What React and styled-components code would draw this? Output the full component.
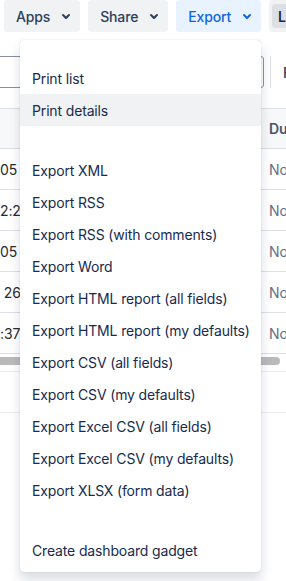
import React from "react";
import styled, { createGlobalStyle } from "styled-components";

const GlobalStyle = createGlobalStyle`
  body {
    margin: 0;
    background: #ffffff;
    font-family: Inter, "Liberation Sans", sans-serif;
    letter-spacing: -0.15px;
    overflow: hidden;
  }
`;

const sections = [
  ["Print list", "Print details"],
  [
    "Export XML",
    "Export RSS",
    "Export RSS (with comments)",
    "Export Word",
    "Export HTML report (all fields)",
    "Export HTML report (my defaults)",
    "Export CSV (all fields)",
    "Export CSV (my defaults)",
    "Export Excel CSV (all fields)",
    "Export Excel CSV (my defaults)",
    "Export XLSX (form data)",
  ],
  ["Create dashboard gadget"],
];

const rows = ["05 PM", "2:21 PM", "05 PM", " 26 PM", ":37 PM"];

function Chevron() {
  return (
    <IconBox>
      <svg width="24" height="24" viewBox="0 0 24 24">
        <path
          fill="currentColor"
          d="M8.292 10.293a1.009 1.009 0 0 0 0 1.419l2.939 2.965c.218.215.5.322.779.322s.556-.107.769-.322l2.93-2.955a1.01 1.01 0 0 0 0-1.419.987.987 0 0 0-1.406 0l-2.298 2.317-2.307-2.327a.99.99 0 0 0-1.406 0z"
        />
      </svg>
    </IconBox>
  );
}

export default function App() {
  return (
    <Page>
      <GlobalStyle />
      <Toolbar>
        <ToolButton>
          Apps
          <Chevron />
        </ToolButton>
        <ToolButton>
          Share
          <Chevron />
        </ToolButton>
        <ToolButton active>
          Export
          <Chevron />
        </ToolButton>
        <ToolButton compact>
          <Chip>List</Chip>
        </ToolButton>
      </Toolbar>

      <SearchRow>
        <SearchInput />
        <Divider />
        <FilterLabel>Filters</FilterLabel>
      </SearchRow>

      <Table>
        <HeaderRow>
          <Cell />
          <HeadCell>Due</HeadCell>
        </HeaderRow>
        {rows.map((text, i) => (
          <Row key={i}>
            <Cell>{text}</Cell>
            <ValueCell>None</ValueCell>
          </Row>
        ))}
      </Table>
      <ScrollTrack>
        <Thumb />
      </ScrollTrack>
      <Footer />

      <Menu>
        {sections.map((items, i) => (
          <Section key={i} first={i === 0}>
            {items.map((label) => (
              <MenuItem key={label} highlighted={label === "Print details"}>
                {label}
              </MenuItem>
            ))}
          </Section>
        ))}
      </Menu>
    </Page>
  );
}

const Page = styled.div`
  position: relative;
  width: 286px;
  height: 581px;
  overflow: hidden;
`;

const Toolbar = styled.div`
  display: flex;
  gap: 8px;
  padding-left: 4px;
  height: 32px;
  white-space: nowrap;
`;

const ToolButton = styled.button`
  display: flex;
  align-items: center;
  flex-shrink: 0;
  height: 32px;
  padding: ${({ compact }) => (compact ? "0 3px" : "0 2px 0 12px")};
  border: none;
  border-radius: 3px;
  background: ${({ active }) => (active ? "#e9f2ff" : "#f1f2f4")};
  color: ${({ active }) => (active ? "#0c66e4" : "#2c3e5d")};
  font-family: inherit;
  font-size: 14px;
  font-weight: 500;
  letter-spacing: -0.15px;
`;

const IconBox = styled.span`
  display: flex;
  width: 24px;
  height: 24px;
  margin-left: 4px;
`;

const Chip = styled.span`
  display: flex;
  align-items: center;
  padding: 0 6px;
  height: 24px;
  border-radius: 3px;
  background: #dcdfe4;
  color: #172b4d;
  font-weight: 600;
`;

const SearchRow = styled.div`
  display: flex;
  align-items: center;
  margin-top: 24px;
  height: 32px;
  white-space: nowrap;
`;

const SearchInput = styled.div`
  flex-shrink: 0;
  width: 278px;
  height: 30px;
  margin-left: -16px;
  border: 1px solid #8590a2;
  border-radius: 3px;
`;

const Divider = styled.div`
  flex-shrink: 0;
  width: 1px;
  height: 32px;
  margin-left: 6px;
  background: #dcdfe4;
`;

const FilterLabel = styled.span`
  margin-left: 12px;
  color: #2c3e5d;
  font-size: 14px;
  font-weight: 500;
`;

const Table = styled.div`
  margin-top: 20px;
  border-top: 1px solid #dcdfe4;
`;

const Row = styled.div`
  display: grid;
  grid-template-columns: 262px 1fr;
  height: 40px;
  border-bottom: 1px solid #dcdfe4;
  font-size: 14px;
  white-space: pre;
  overflow: hidden;
`;

const HeaderRow = styled(Row)`
  height: 39px;
  background: #f7f8f9;
`;

const Cell = styled.div`
  display: flex;
  align-items: center;
  color: #292a2e;
`;

const HeadCell = styled(Cell)`
  padding-left: 7px;
  color: #44546f;
  font-weight: 600;
`;

const ValueCell = styled(Cell)`
  padding-left: 7px;
  color: #626f86;
`;

const ScrollTrack = styled.div`
  height: 14px;
  border-bottom: 1px solid #ebecf0;
`;

const Thumb = styled.div`
  width: 290px;
  height: 8px;
  margin-top: 3px;
  margin-left: -10px;
  border-radius: 4px;
  background: #bababa;
`;

const Footer = styled.div`
  height: 40px;
  border-bottom: 1px solid #ebecf0;
`;

const Menu = styled.div`
  position: absolute;
  top: 40px;
  left: 20px;
  width: 241px;
  padding: 6px 0;
  background: #ffffff;
  border-radius: 4px;
  box-shadow: 0 8px 12px rgba(9, 30, 66, 0.15), 0 0 1px rgba(9, 30, 66, 0.31);
`;

const Section = styled.div`
  padding-top: ${({ first }) => (first ? "16px" : "28px")};
`;

const MenuItem = styled.div`
  display: flex;
  align-items: center;
  height: 32px;
  padding: 0 12px;
  background: ${({ highlighted }) => (highlighted ? "#f1f2f4" : "transparent")};
  color: #172b4d;
  font-size: 14px;
  white-space: nowrap;
`;
